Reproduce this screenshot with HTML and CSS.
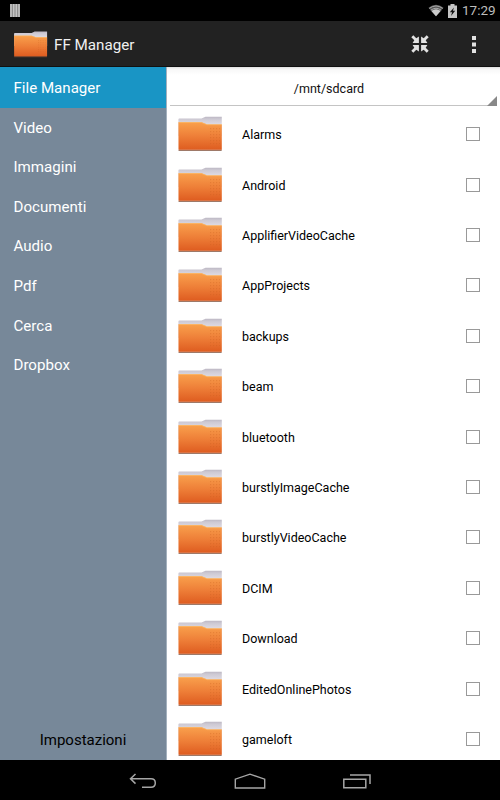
FILE: index.html
```html
<!DOCTYPE html>
<html lang="it">
<head>
<meta charset="utf-8">
<title>FF Manager</title>
<link rel="stylesheet" href="styles.css">
</head>
<body>
<svg class="defs" width="0" height="0">
  <defs>
    <linearGradient id="front" x1="0" y1="0" x2="0" y2="1">
      <stop offset="0" stop-color="#f9a04c"/>
      <stop offset="0.5" stop-color="#ee7f38"/>
      <stop offset="1" stop-color="#de5c20"/>
    </linearGradient>
    <linearGradient id="back" x1="0" y1="0" x2="0" y2="1">
      <stop offset="0" stop-color="#bdb8c4"/>
      <stop offset="0.12" stop-color="#cdc9d3"/>
      <stop offset="0.4" stop-color="#dedae2"/>
    </linearGradient>
    <pattern id="dots" width="3" height="3" patternUnits="userSpaceOnUse">
      <rect width="1.2" height="1.2" fill="#c65a1a" fill-opacity="0.28"/>
    </pattern>
    <symbol id="folder" viewBox="0 0 46 36">
      <rect x="1.4" y="33.4" width="43.4" height="1.5" rx="0.7" fill="#7d4c36" fill-opacity="0.75"/>
      <path d="M1.4 3.6Q1.4 2.6 2.4 2.6H24.5L28.5 0.8H44.8V20H1.4Z" fill="url(#back)"/>
      <path d="M1.4 6.2H24.5L30 8.4H44.8V33.8H1.9Q1.5 33.8 1.5 33Z" fill="url(#front)"/>
      <path d="M1.8 6.5H24.5L30 8.7H44.6" fill="none" stroke="#ffb65c" stroke-width="0.7"/>
      <rect x="33" y="11" width="10" height="18" fill="url(#dots)"/>
    </symbol>
  </defs>
</svg>
<div class="screen">
  <div class="status">
    <svg class="bars" width="10" height="13" viewBox="0 0 10 13"><path d="M0 0H10V13H0Z" fill="#8c8c8c"/><path d="M1 0V13M3.7 0V13M6.3 0V13M9 0V13" stroke="#c4c4c4" stroke-width="1.5"/></svg>
    <svg class="wifi" width="16" height="13" viewBox="0 0 17 13"><path d="M0.5 3.6Q8.5-2.6 16.5 3.6L8.5 12.5Z" fill="#555"/><path d="M3.6 7Q8.5 3.3 13.4 7L8.5 12.5Z" fill="#ccc"/><path d="M1.3 4.3Q8.5-1 15.7 4.3M3 6.2Q8.5 2 14 6.2" fill="none" stroke="#bbb" stroke-width="0.9"/></svg>
    <svg class="battery" width="9" height="14" viewBox="0 0 9 14"><path d="M0 1.4H2.5V0H6.5V1.4H9V14H0Z" fill="#c4c4c4"/><path d="M6 3.4L1.8 8.3H4.1L3 12L7.2 6.8H4.9Z" fill="#111"/></svg>
    <span class="clock">17:29</span>
  </div>
  <header class="bar">
    <svg class="logo" width="35" height="27" viewBox="0 0 46 36" preserveAspectRatio="none"><use href="#folder" width="46" height="36"/></svg>
    <h1>FF Manager</h1>
    <svg class="shrink" width="18" height="18" viewBox="0 0 18 18">
      <defs><path id="arrow" d="M0.3 2.3L2.3 0.3L5.3 3.3L7.9 1.6V7.9H1.6L3.3 5.3Z"/></defs>
      <g fill="#e2e2e2"><use href="#arrow"/><use href="#arrow" transform="rotate(90 9 9)"/><use href="#arrow" transform="rotate(180 9 9)"/><use href="#arrow" transform="rotate(270 9 9)"/></g>
    </svg>
    <svg class="more" width="4" height="17" viewBox="0 0 4 17"><path d="M0 0h4v4H0zM0 6.5h4v4H0zM0 13h4v4H0z" fill="#e2e2e2"/></svg>
  </header>
  <main class="body">
    <nav class="side">
      <a class="item active">File Manager</a>
      <a class="item">Video</a>
      <a class="item">Immagini</a>
      <a class="item">Documenti</a>
      <a class="item">Audio</a>
      <a class="item">Pdf</a>
      <a class="item">Cerca</a>
      <a class="item">Dropbox</a>
      <a class="settings">Impostazioni</a>
    </nav>
    <section class="files">
      <div class="path"><span>/mnt/sdcard</span><svg class="corner" width="10" height="10" viewBox="0 0 10 10"><path d="M10 0V10H0Z" fill="#888"/></svg></div>
      <div class="row"><svg class="folder"><use href="#folder"/></svg><span class="name">Alarms</span><i class="check"></i></div>
      <div class="row"><svg class="folder"><use href="#folder"/></svg><span class="name">Android</span><i class="check"></i></div>
      <div class="row"><svg class="folder"><use href="#folder"/></svg><span class="name">ApplifierVideoCache</span><i class="check"></i></div>
      <div class="row"><svg class="folder"><use href="#folder"/></svg><span class="name">AppProjects</span><i class="check"></i></div>
      <div class="row"><svg class="folder"><use href="#folder"/></svg><span class="name">backups</span><i class="check"></i></div>
      <div class="row"><svg class="folder"><use href="#folder"/></svg><span class="name">beam</span><i class="check"></i></div>
      <div class="row"><svg class="folder"><use href="#folder"/></svg><span class="name">bluetooth</span><i class="check"></i></div>
      <div class="row"><svg class="folder"><use href="#folder"/></svg><span class="name">burstlyImageCache</span><i class="check"></i></div>
      <div class="row"><svg class="folder"><use href="#folder"/></svg><span class="name">burstlyVideoCache</span><i class="check"></i></div>
      <div class="row"><svg class="folder"><use href="#folder"/></svg><span class="name">DCIM</span><i class="check"></i></div>
      <div class="row"><svg class="folder"><use href="#folder"/></svg><span class="name">Download</span><i class="check"></i></div>
      <div class="row"><svg class="folder"><use href="#folder"/></svg><span class="name">EditedOnlinePhotos</span><i class="check"></i></div>
      <div class="row"><svg class="folder"><use href="#folder"/></svg><span class="name">gameloft</span><i class="check"></i></div>
    </section>
  </main>
  <footer class="keys">
    <svg width="28" height="16" viewBox="0 0 28 16"><path d="M6.5 1L1.5 5.8L6.5 10.6M1.5 5.8H22Q26.3 5.8 26.3 10T22 14.2H13" fill="none" stroke="#a6a6a6" stroke-width="1.5"/></svg>
    <svg width="32" height="16" viewBox="0 0 32 16"><path d="M1.3 15V6.2L16 1.2L30.7 6.2V15Z" fill="none" stroke="#a6a6a6" stroke-width="1.4"/></svg>
    <svg width="28" height="16" viewBox="0 0 28 16"><path d="M0.8 6.2H22.8V14.8H0.8Z" fill="none" stroke="#a6a6a6" stroke-width="1.5"/><path d="M7 2H27V11" fill="none" stroke="#a6a6a6" stroke-width="1.5"/></svg>
  </footer>
</div>
</body>
</html>
```
FILE: styles.css
```css
* { box-sizing: border-box; }
body { margin: 0; background: #000; font-family: Roboto, "Liberation Sans", sans-serif; }
.defs { position: absolute; }
.screen { width: 500px; height: 800px; display: flex; flex-direction: column; overflow: hidden; }
.status { height: 21px; flex: none; display: flex; align-items: center; padding: 0 5px 0 10px; background: #000; }
.bars { margin-right: auto; }
.wifi { margin-right: 4px; }
.battery { margin-right: 5px; }
.clock { width: 33px; color: #bdbdbd; font-size: 13.5px; line-height: 21px; white-space: nowrap; }
.bar { height: 46px; flex: none; display: flex; align-items: center; padding: 0 24px 0 13px; background: #222; border-bottom: 1px solid #111; }
.logo { margin: 1px 6px 0 0; }
.bar h1 { margin: 2px auto 0 0; color: #f0f0f0; font-size: 15.2px; font-weight: 400; }
.shrink { margin-right: 43px; }
.more { margin-top: 1px; }
.body { height: 693px; flex: none; display: flex; overflow: hidden; }
.side { width: 167px; flex: none; display: flex; flex-direction: column; background: #778899; border-right: 1px solid #a3b0bd; padding-top: 1px; }
.item { height: 39.6px; flex: none; padding-left: 13.5px; color: #fff; font-size: 15.1px; line-height: 40.8px; }
.active { background: #1995c5; box-shadow: 0 -1px #1995c5; }
.settings { margin-top: auto; height: 40px; line-height: 40px; text-align: center; font-size: 15px; color: #000; }
.files { flex: 1; background: linear-gradient(#dfdfdf 0, #f7f7f7 2px, #fff 8px); }
.path { position: relative; height: 39px; margin: 0 3px 3.6px; padding-right: 9px; border-bottom: 1px solid #c4c4c4; text-align: center; font-size: 12.5px; line-height: 43px; color: #111; }
.corner { position: absolute; right: 0; bottom: -1px; }
.row { height: 50.4px; display: flex; align-items: center; padding: 0 20px 0 10px; }
.folder { width: 46px; height: 36px; margin: 0 19px 1px 0; flex: none; }
.name { font-size: 12.5px; color: #000; margin-right: auto; }
.check { width: 14px; height: 14px; margin-bottom: 1px; border: 1px solid #999; }
.keys { height: 40px; flex: none; display: flex; align-items: center; justify-content: space-between; padding: 2px 129px 0 129px; background: #000; }
```
